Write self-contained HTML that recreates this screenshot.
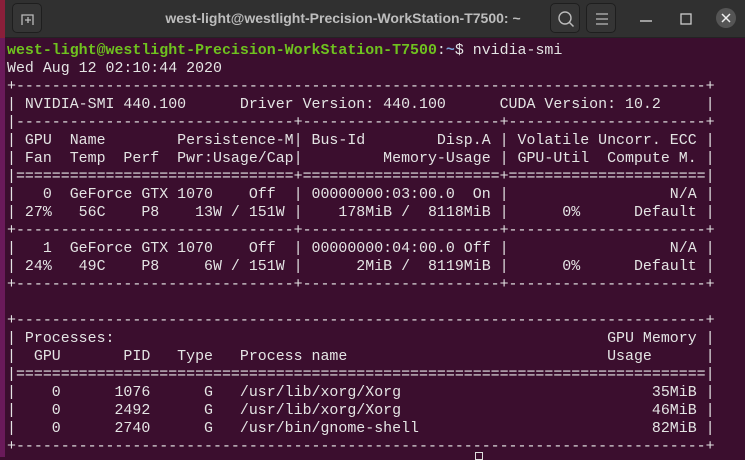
<!DOCTYPE html>
<html><head><meta charset="utf-8"><style>
*{margin:0;padding:0;box-sizing:border-box}
body{width:745px;height:457px;overflow:hidden;background:#3b0e2e;position:relative;font-family:"Liberation Sans",sans-serif}
#tb{position:absolute;left:0;top:0;width:745px;height:38px;background:#303030;border-bottom:1px solid #232323}
#strip{position:absolute;left:0;top:0;width:5px;height:457px;background:#6a1a5a}
#strip2{position:absolute;left:0;top:0;width:5px;height:38px;background:#8a1f3a}
.btn{position:absolute;top:3px;width:30px;height:30px;border:1px solid #1e1e1e;border-radius:5px;background:#353535}
#title{position:absolute;top:10px;left:0;width:686px;text-align:center;color:#bdbdbd;font-weight:bold;font-size:14px}
pre{position:absolute;left:7px;top:42px;font-family:"Liberation Mono",monospace;font-size:15px;line-height:18px;color:#e4e4e4;transform:scaleX(0.995);transform-origin:0 0}
.g{color:#6fc21f;font-weight:bold}.b{color:#7aa6da;font-weight:bold}
</style></head><body>
<div id="tb">
 <div class="btn" style="left:12px"><svg width="30" height="30"><path d="M9 21V11h11v10M15 13v6M12 16h6" fill="none" stroke="#bbb" stroke-width="1.3"/></svg></div>
 <div id="title">west-light@westlight-Precision-WorkStation-T7500: ~</div>
 <div class="btn" style="left:550px"><svg width="30" height="30"><circle cx="14" cy="14" r="6" fill="none" stroke="#bbb" stroke-width="1.4"/><path d="M18.5 18.5l4 4" stroke="#bbb" stroke-width="1.5"/></svg></div>
 <div class="btn" style="left:586px"><svg width="30" height="30"><path d="M9 10h12M9 15h12M9 20h12" stroke="#bbb" stroke-width="1.3"/></svg></div>
 <svg style="position:absolute;left:636px;top:8px" width="105" height="24"><path d="M4 13h12" stroke="#ccc" stroke-width="1.4"/><rect x="45" y="6" width="10" height="10" fill="none" stroke="#ccc" stroke-width="1.3"/><circle cx="90" cy="10" r="10" fill="#555"/><path d="M86 6l8 8M94 6l-8 8" stroke="#eee" stroke-width="1.5"/></svg>
</div>
<div id="strip"></div><div id="strip2"></div>
<pre><span class="g">west-light@westlight-Precision-WorkStation-T7500</span>:<span class="b">~</span>$ nvidia-smi
Wed Aug 12 02:10:44 2020
+-----------------------------------------------------------------------------+
| NVIDIA-SMI 440.100      Driver Version: 440.100      CUDA Version: 10.2     |
|-------------------------------+----------------------+----------------------+
| GPU  Name        Persistence-M| Bus-Id        Disp.A | Volatile Uncorr. ECC |
| Fan  Temp  Perf  Pwr:Usage/Cap|         Memory-Usage | GPU-Util  Compute M. |
|===============================+======================+======================|
|   0  GeForce GTX 1070    Off  | 00000000:03:00.0  On |                  N/A |
| 27%   56C    P8    13W / 151W |    178MiB /  8118MiB |      0%      Default |
+-------------------------------+----------------------+----------------------+
|   1  GeForce GTX 1070    Off  | 00000000:04:00.0 Off |                  N/A |
| 24%   49C    P8     6W / 151W |      2MiB /  8119MiB |      0%      Default |
+-------------------------------+----------------------+----------------------+

+-----------------------------------------------------------------------------+
| Processes:                                                       GPU Memory |
|  GPU       PID   Type   Process name                             Usage      |
|=============================================================================|
|    0      1076      G   /usr/lib/xorg/Xorg                            35MiB |
|    0      2492      G   /usr/lib/xorg/Xorg                            46MiB |
|    0      2740      G   /usr/bin/gnome-shell                          82MiB |
+-----------------------------------------------------------------------------+</pre>
<div style="position:absolute;left:475px;top:452px;width:8px;height:8px;border:1px solid #ddd"></div>
</body></html>
